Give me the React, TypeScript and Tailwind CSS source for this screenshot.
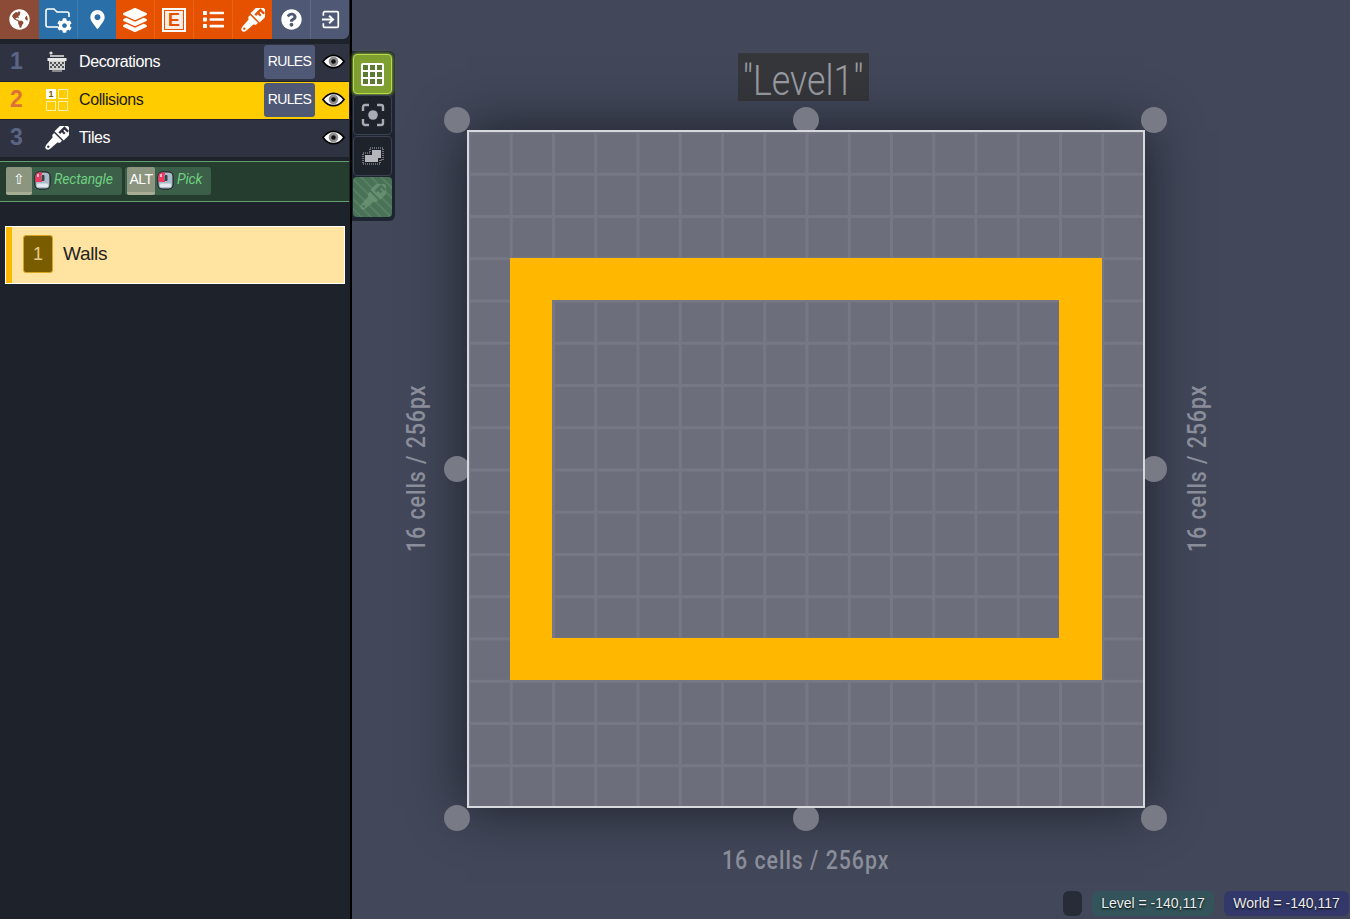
import { FaGlobeAmericas, FaLayerGroup, FaList, FaMapMarkerAlt, FaQuestionCircle, FaCog } from 'react-icons/fa';

function Brush({ className, cut = '#2f3341' }: { className?: string; cut?: string }) {
  return (
    <svg viewBox="0 0 24 24" className={className}>
      <g transform="rotate(45 12 12)">
        <path d="M5.5 -3 Q5.5 -4 6.5 -4 H17.5 Q18.5 -4 18.5 -3 V9 H5.5 Z" fill="currentColor" />
        <path d="M9 -1.5 H15.5 V0.8 H11.4 V2.4 H14.5 V4.6 H11.4 V7 H9 Z" fill={cut} />
        <path d="M6.5 10.5 H17.5 V12.5 Q17.5 14 15.5 14.5 L14.8 24 Q14.5 27.5 12 27.5 Q9.5 27.5 9.2 24 L8.5 14.5 Q6.5 14 6.5 12.5 Z" fill="currentColor" />
        <circle cx="12" cy="24.3" r="1.2" fill={cut} />
      </g>
    </svg>
  );
}

function FolderCog({ className }: { className?: string }) {
  return (
    <div className={`relative ${className}`}>
      <svg viewBox="0 0 26 22" className="w-[26px] h-[22px]" fill="none" stroke="currentColor" strokeWidth="1.6">
        <path d="M13 19 H3 A2 2 0 0 1 1 17 V3 A2 2 0 0 1 3 1 H9 L12 4 H22 A2 2 0 0 1 24 6 V9" />
      </svg>
      <FaCog className="absolute right-[-1px] bottom-[-3px] text-[15px]" />
    </div>
  );
}

function SignIn({ className }: { className?: string }) {
  return (
    <svg viewBox="0 0 20 20" className={className} fill="none" stroke="currentColor" strokeWidth="1.8">
      <path d="M2.5 6 V3 A1.2 1.2 0 0 1 3.7 1.8 H17 A1.2 1.2 0 0 1 18.2 3 V17 A1.2 1.2 0 0 1 17 18.2 H3.7 A1.2 1.2 0 0 1 2.5 17 V14" />
      <path d="M1 10 H12 M8.5 6 L12.8 10 L8.5 14" strokeWidth="2" />
    </svg>
  );
}

function Eye() {
  return (
    <svg viewBox="0 0 24 15" className="w-[23px] h-[15px]">
      <path d="M1 7.5 C5 2 9 1 12 1 C15 1 19 2 23 7.5 C19 13 15 14 12 14 C9 14 5 13 1 7.5 Z" fill="#fff" stroke="#000" strokeWidth="1.8" />
      <circle cx="12" cy="7.5" r="5" fill="#8f8f8f" />
      <circle cx="12" cy="7.5" r="2.4" fill="#111" />
    </svg>
  );
}

function MouseIcon() {
  return (
    <svg viewBox="0 0 17 19" className="w-[17px] h-[19px] shrink-0">
      <rect x="0.5" y="0.5" width="16" height="18" rx="5" fill="#15151b" />
      <rect x="1.5" y="1.5" width="14" height="16" rx="4" fill="#a9bcc9" />
      <path d="M1.5 11 V5.5 A4 4 0 0 1 5.5 1.5 H8 V4 H7 V9 H8 V11 Z" fill="#f03a5f" />
      <rect x="3" y="3" width="2" height="3" fill="#f9b6c4" />
      <rect x="7.5" y="4" width="3" height="6" rx="1" fill="#3a3f4a" />
      <rect x="3" y="12.5" width="11" height="3.5" rx="1" fill="#e2e7ec" />
    </svg>
  );
}

function LayerRow({ num, name, active, rules, icon }: { num: number; name: string; active?: boolean; rules?: boolean; icon: React.ReactNode }) {
  return (
    <div className={`flex items-center h-[37px] pb-[2px] pl-[10px] pr-[4px] ${active ? 'bg-[#ffcc00] text-[#1a1a1a]' : 'bg-[#2f3341] text-white'}`}>
      <span className={`w-[26px] text-[23px] font-bold font-['Liberation_Sans'] ${active ? 'text-[#e0703a]' : 'text-[#5a6585]'}`}>{num}</span>
      <div className="w-[42px] mr-px flex justify-center">{icon}</div>
      <span className="flex-1 text-[16px] tracking-[-0.4px] font-['Liberation_Sans']">{name}</span>
      {rules && (
        <div className="w-[51px] h-[34px] mr-[7px] rounded-[3px] bg-[#4f5874] text-white text-[14px] tracking-[-0.6px] flex items-center justify-center font-['Liberation_Sans']">RULES</div>
      )}
      <Eye />
    </div>
  );
}

function Key({ label, w }: { label: string; w: string }) {
  return (
    <div className={`${w} h-[28px] rounded-[2px] bg-[#8b957f] border-b-[3px] border-[#a7ad93] text-white text-[14px] not-italic flex items-center justify-center font-['Liberation_Sans'] tracking-[-0.5px]`}>{label}</div>
  );
}

function ToolBtn({ children, className }: { children: React.ReactNode; className?: string }) {
  return <div className={`w-[39px] h-[40px] rounded-[4px] flex items-center justify-center ${className}`}>{children}</div>;
}

function Handle({ className }: { className: string }) {
  return <div className={`absolute w-[26px] h-[26px] rounded-full bg-[#787a85] ${className}`} />;
}

export default function App() {
  return (
    <div className="relative flex h-[919px] w-[1350px] overflow-hidden bg-[#424759] font-['Liberation_Sans',sans-serif]">
      {/* Left panel */}
      <aside className="w-[352px] shrink-0 bg-[#1e222b] border-r-[2px] border-black pr-px flex flex-col">
        <div className="flex h-[39px] text-white text-[21px]">
          <div className="w-[39px] bg-[#8b4b37] flex items-center justify-center"><FaGlobeAmericas /></div>
          <div className="w-[39px] bg-[#2a6fa8] border-r border-white/10 flex items-center justify-center"><FolderCog className="w-[26px] h-[22px] -mt-[2px]" /></div>
          <div className="w-[38px] bg-[#2a6fa8] flex items-center justify-center"><FaMapMarkerAlt className="text-[19px]" /></div>
          <div className="w-[39px] bg-[#e65100] border-r border-white/10 flex items-center justify-center"><FaLayerGroup className="text-[24px]" /></div>
          <div className="w-[39px] bg-[#e65100] border-r border-white/10 flex items-center justify-center">
            <div className="w-[24px] h-[24px] border-[2px] border-white p-px flex">
              <span className="w-full h-full bg-[#fbeee6] text-[#e65100] font-bold text-[18px] leading-[18px] text-center">E</span>
            </div>
          </div>
          <div className="w-[39px] bg-[#e65100] border-r border-white/10 flex items-center justify-center"><FaList /></div>
          <div className="w-[39px] bg-[#e65100] flex items-center justify-center"><Brush className="w-[24px] h-[24px]" cut="#e65100" /></div>
          <div className="w-[39px] bg-[#4f5874] border-r border-white/10 flex items-center justify-center"><FaQuestionCircle /></div>
          <div className="w-[38px] bg-[#4f5874] rounded-br-[6px] flex items-center justify-center"><SignIn className="w-[19px] h-[19px]" /></div>
        </div>
        <div className="mt-[5px] flex flex-col gap-px">
          <LayerRow num={1} name="Decorations" rules icon={
            <svg viewBox="0 0 20 21" className="w-[20px] h-[21px]">
              <circle cx="4" cy="2" r="1.6" fill="#ddd" />
              <path d="M3 4 H17 V6 H3 Z" fill="#bbb" />
              <path d="M0.5 7 H19.5 V10 H0.5 Z" fill="#e8e8e8" />
              <path d="M2 10 H18 V19 H2 Z" fill="#d0d0d0" />
              <path d="M3 11 H5 V13 H3 Z M7 11 H9 V13 H7 Z M11 11 H13 V13 H11 Z M15 11 H17 V13 H15 Z M5 13 H7 V15 H5 Z M9 13 H11 V15 H9 Z M13 13 H15 V15 H13 Z M3 15 H5 V17 H3 Z M7 15 H9 V17 H7 Z M11 15 H13 V17 H11 Z M15 15 H17 V17 H15 Z" fill="#555" />
              <path d="M5 19 H15 V21 H5 Z" fill="#888" />
            </svg>
          } />
          <LayerRow num={2} name="Collisions" active rules icon={
            <div className="grid grid-cols-2 gap-[2px] w-[22px]">
              <div className="w-[10px] h-[10px] bg-white text-[#7a5c00] text-[9px] leading-[10px] font-bold text-center">1</div>
              <div className="w-[10px] h-[10px] border border-[#ffeeb0]" />
              <div className="w-[10px] h-[10px] border border-[#ffeeb0]" />
              <div className="w-[10px] h-[10px] border border-[#ffeeb0]" />
            </div>
          } />
          <LayerRow num={3} name="Tiles" icon={<div className="text-white"><Brush className="w-[24px] h-[24px]" /></div>} />
        </div>
        <div className="mt-[4px] h-[41px] pb-[2px] bg-[#253d2f] border-y border-[#62a06f] flex items-center gap-[3px] pl-[6px] text-[#6fd07f] text-[14px] italic font-['Roboto'] tracking-[-0.15px]">
          <div className="flex items-center h-[28px] w-[116px] rounded-[3px] bg-[#3c5f4a] gap-[2px]"><Key label="⇧" w="w-[26px]" /><MouseIcon /><span className="ml-[1px] -mt-[2px]">Rectangle</span></div>
          <div className="flex items-center h-[28px] w-[86px] pl-[2px] rounded-[3px] bg-[#3c5f4a] gap-[2px]"><Key label="ALT" w="w-[28px]" /><MouseIcon /><span className="ml-[1px] -mt-[2px]">Pick</span></div>
        </div>
        <div className="mt-[24px] ml-[5px] mr-[4px] h-[58px] border border-white bg-[#ffe3a0] flex items-center">
          <div className="w-[6px] self-stretch bg-[#ffb700]" />
          <div className="ml-[11px] -mt-[2px] w-[30px] h-[38px] rounded-[3px] bg-[#7a5c00] border border-[#d9a520] text-[#e3cb8c] text-[18px] flex items-center justify-center">1</div>
          <span className="ml-[10px] -mt-[2px] text-[#222] text-[19px] tracking-[-0.3px]">Walls</span>
        </div>
      </aside>

      {/* Canvas */}
      <main className="relative flex-1">
        <div className="absolute left-0 top-[51px] w-[43px] h-[170px] rounded-r-[6px] bg-[#1d2530] flex flex-col pl-[1px] pt-[3px] gap-px">
          <ToolBtn className="bg-[#7f9f30] border border-[#b5dc45] shadow-[0_0_4px_#b5dc45]">
            <div className="grid grid-cols-3 gap-[2px] p-[2px] bg-white w-[23px] h-[23px] rounded-[2px]">
              {Array.from({ length: 9 }).map((_, i) => <div key={i} className="bg-[#5d7a34]" />)}
            </div>
          </ToolBtn>
          <ToolBtn className="bg-[#1e222b] border border-[#3c4152]">
            <svg viewBox="0 0 24 24" className="w-[24px] h-[24px]" fill="none" stroke="#a8abb3" strokeWidth="2.4">
              <path d="M2 8 V4 A2 2 0 0 1 4 2 H8 M16 2 H20 A2 2 0 0 1 22 4 V8 M22 16 V20 A2 2 0 0 1 20 22 H16 M8 22 H4 A2 2 0 0 1 2 20 V16" />
              <circle cx="12" cy="12" r="4.8" fill="#a8abb3" stroke="none" />
            </svg>
          </ToolBtn>
          <ToolBtn className="bg-[#1e222b] border border-[#3c4152]">
            <svg viewBox="0 0 24 20" className="w-[24px] h-[20px]">
              <path d="M4 9 H11 V4 H20 V12 H17 V16 H4 Z" fill="#b4b6bc" />
              <path d="M2 7 H9 V2 H22 V14 H19 V18 H2 Z" fill="none" stroke="#a8abb3" strokeWidth="1.2" strokeDasharray="1 1" />
            </svg>
          </ToolBtn>
          <ToolBtn className="bg-[repeating-linear-gradient(45deg,#4a7257_0,#4a7257_5px,#557e62_5px,#557e62_7px)] text-[#6f9a78]">
            <Brush className="w-[26px] h-[26px] opacity-70" cut="#4a7257" />
          </ToolBtn>
        </div>

        <div className="absolute left-[386px] top-[53px] h-[48px] w-[131px] bg-[#36373b] text-[#9a9ca2] text-[42px] leading-[56px] font-['Roboto'] font-light whitespace-nowrap flex justify-center">
          <span className="shrink-0 inline-block scale-x-[0.85]">"Level1"</span>
        </div>

        {/* Level shadow sits below the handles, the level itself above */}
        <div className="absolute left-[115px] top-[130px] w-[678px] h-[678px] shadow-[0_0_50px_rgba(15,17,25,0.75)]" />

        <Handle className="left-[92px] top-[107px]" />
        <Handle className="left-[441px] top-[107px]" />
        <Handle className="left-[789px] top-[107px]" />
        <Handle className="left-[92px] top-[456px]" />
        <Handle className="left-[789px] top-[456px]" />
        <Handle className="left-[92px] top-[805px]" />
        <Handle className="left-[441px] top-[805px]" />
        <Handle className="left-[789px] top-[805px]" />

        <div className="absolute left-[115px] top-[130px] w-[678px] h-[678px] border-[2px] border-[#d8d9de] bg-[#6c6e7c]">
          <div className="absolute inset-0 bg-[linear-gradient(to_right,#767886_3px,transparent_3px),linear-gradient(to_bottom,#767886_3px,transparent_3px)] bg-[size:42.25px_42.25px] bg-[position:-1.5px_-1.5px]" />
          <div className="absolute left-[41px] top-[126px] w-[592px] h-[422px] border-[42px] border-r-[43px] border-[#ffb700]" />
        </div>

        <div className="absolute left-[370px] top-[842px] text-[#8a8d9a] text-[26px] leading-[36px] tracking-[1.2px] font-medium whitespace-nowrap font-['Roboto'] origin-left scale-x-[0.82]">16 cells / 256px</div>
        <div className="absolute left-[51px] top-[552px] text-[#8a8d9a] text-[26px] leading-[26px] tracking-[1.2px] font-medium whitespace-nowrap font-['Roboto'] origin-top-left -rotate-90 scale-x-[0.82]">16 cells / 256px</div>
        <div className="absolute left-[832px] top-[552px] text-[#8a8d9a] text-[26px] leading-[26px] tracking-[1.2px] font-medium whitespace-nowrap font-['Roboto'] origin-top-left -rotate-90 scale-x-[0.82]">16 cells / 256px</div>

        <div className="absolute right-[1px] bottom-[3px] flex gap-[10px] text-[#ecedf0] text-[14px] [text-shadow:0_1px_2px_#000]">
          <div className="w-[19px] h-[25px] rounded-[6px] bg-[#272c38]" />
          <div className="h-[25px] w-[122px] rounded-[6px] bg-[#32545a] flex items-center justify-center">Level = -140,117</div>
          <div className="h-[25px] w-[125px] rounded-[6px] bg-[#32396a] flex items-center justify-center">World = -140,117</div>
        </div>
      </main>
    </div>
  );
}
